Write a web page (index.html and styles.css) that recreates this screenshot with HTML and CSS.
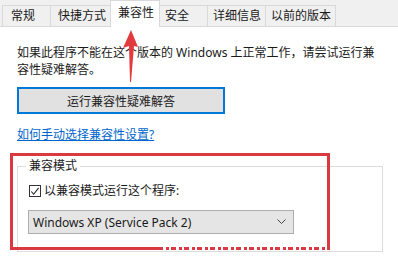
FILE: index.html
```html
<!DOCTYPE html>
<html lang="zh-CN">
<head>
<meta charset="utf-8">
<link rel="stylesheet" href="styles.css">
</head>
<body>
<div class="tabs">
  <div class="tab t1">常规</div>
  <div class="tab t2">快捷方式</div>
  <div class="tab t3 active">兼容性</div>
  <div class="tab t4">安全</div>
  <div class="tab t5">详细信息</div>
  <div class="tab t6">以前的版本</div>
</div>
<div class="panel">
  <p class="intro">如果此程序不能在这个版本的 Windows 上正常工作，请尝试运行兼<br>容性疑难解答。</p>
  <button class="run">运行兼容性疑难解答</button>
  <a class="help" href="#">如何手动选择兼容性设置?</a>
  <fieldset class="group">
    <legend>兼容模式</legend>
    <label class="check">
      <span class="box"><svg width="11" height="11" viewBox="0 0 11 11"><path d="M1.5 5.5 L4 8.5 L9.5 1.5" fill="none" stroke="#222" stroke-width="1.2"/></svg></span>
      以兼容模式运行这个程序:
    </label>
    <div class="select">
      <span>Windows XP (Service Pack 2)</span>
      <svg class="chev" width="9" height="6" viewBox="0 0 9 6"><path d="M0.5 0.5 L4.5 4.5 L8.5 0.5" fill="none" stroke="#444" stroke-width="1"/></svg>
    </div>
  </fieldset>
</div>
<div class="mark"></div>
<div class="watermark"></div>
<svg class="arrow" width="24" height="60" viewBox="0 0 24 60">
  <polygon points="11,0 18,17 14,16 11,52 10,52 9,16 3,18" fill="#e23b3e"/>
</svg>
</body>
</html>
```
FILE: styles.css
```css
html, body {
  margin: 0;
  padding: 0;
  background: #ffffff;
}
body {
  width: 398px;
  height: 260px;
  overflow: hidden;
  position: relative;
  font-family: "Noto Sans", "Noto Sans CJK SC", sans-serif;
  font-size: 12px;
  color: #1a1a1a;
}
.tabs {
  display: flex;
  align-items: flex-end;
  height: 26px;
  background: #f0f0f0;
  border-bottom: 1px solid #d9d9d9;
  padding-left: 2px;
}
.tab {
  box-sizing: border-box;
  height: 21px;
  line-height: 19px;
  border: 1px solid #d9d9d9;
  border-bottom: none;
  border-right: none;
  background: #f0f0f0;
  padding-left: 7px;
  color: #1a1a1a;
}
.t1 { width: 48px; padding-left: 8px; }
.t2 { width: 60px; }
.t3 { width: 50px; }
.t4 { width: 47px; padding-left: 5px; }
.t5 { width: 58px; padding-left: 5px; }
.t6 { width: 71px; padding-left: 5px; border-right: 1px solid #d9d9d9; }
.tab.active {
  height: 26px;
  line-height: 24px;
  background: #ffffff;
  border-right: 1px solid #d9d9d9;
  margin-bottom: -1px;
  height: 27px;
  padding-bottom: 2px;
}
.tab.active + .tab { border-left: none; }
.panel {
  padding-left: 17px;
}
.intro {
  margin: 17px 0 0;
  line-height: 17px;
}
.run {
  display: block;
  box-sizing: border-box;
  margin-top: 9px;
  width: 208px;
  height: 27px;
  background: #e1e1e1;
  border: 2px solid #0078d7;
  font-family: inherit;
  font-size: 12px;
  color: #1a1a1a;
  padding: 0;
}
.help {
  display: block;
  margin-top: 12px;
  line-height: 17px;
  color: #0066cc;
  text-decoration: underline;
  width: max-content;
}
.group {
  box-sizing: border-box;
  width: 366px;
  margin: 17px 0 0;
  padding: 0 11px 17px;
  border: 1px solid #dcdcdc;
  min-inline-size: 0;
}
.group legend {
  margin-left: -3px;
  padding: 0 3px;
  line-height: 12px;
}
.check {
  display: flex;
  align-items: center;
  gap: 3px;
  margin-top: 11px;
  line-height: 16px;
}
.box {
  box-sizing: border-box;
  width: 12px;
  height: 12px;
  border: 1px solid #333;
  display: flex;
  align-items: center;
  justify-content: center;
  background: #fff;
}
.box svg { display: block; }
.select {
  box-sizing: border-box;
  display: flex;
  align-items: center;
  justify-content: space-between;
  margin: 11px 0 0 -1px;
  width: 266px;
  height: 24px;
  padding: 0 7px 0 4px;
  background: #e5e5e5;
  border: 1px solid #adadad;
}
.chev { display: block; }
.mark {
  position: absolute;
  left: 10px;
  top: 153px;
  width: 320px;
  height: 97px;
  box-sizing: border-box;
  border: 3px solid #d9393f;
}
.watermark {
  position: absolute;
  left: 163px;
  top: 247px;
  width: 167px;
  height: 4px;
  background: repeating-linear-gradient(90deg, #ffffff 0 3px, transparent 3px 6px, #ffffff 6px 8px, transparent 8px 13px);
}
.arrow {
  position: absolute;
  left: 120px;
  top: 30px;
}
```
